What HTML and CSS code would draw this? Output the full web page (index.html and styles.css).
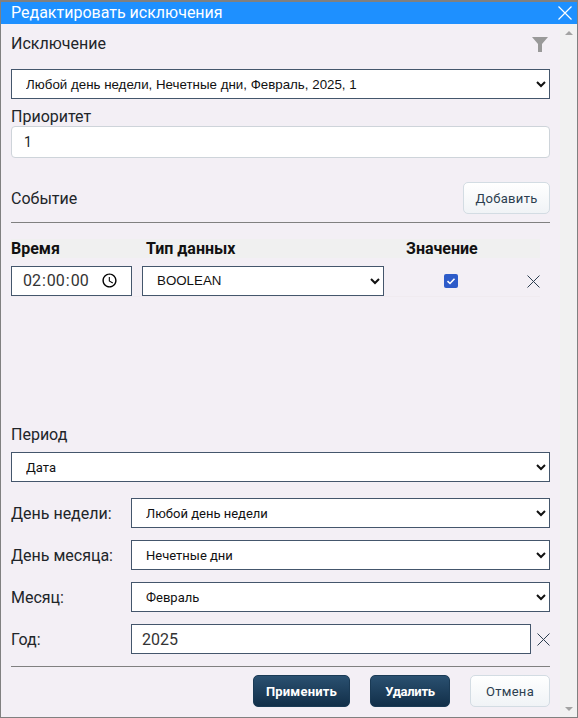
FILE: index.html
```html
<!DOCTYPE html>
<html lang="ru">
<head>
<meta charset="utf-8">
<title>Редактировать исключения</title>
<link rel="stylesheet" href="styles.css">
</head>
<body>
<div class="window">
  <header class="titlebar">
    <span class="title">Редактировать исключения</span>
    <svg class="close" viewBox="0 0 14 14" width="14" height="14"><path d="M0.5 0.5L13.5 13.5M13.5 0.5L0.5 13.5" stroke="#fff" stroke-width="1.2" fill="none"/></svg>
  </header>
  <div class="frame">
    <main class="content">
      <div class="head-row">
        <span class="label">Исключение</span>
        <svg class="filter" viewBox="0 0 16 15" width="16" height="15"><path d="M0 0H16L10 7V15H6V7Z" fill="#999"/></svg>
      </div>
      <select class="field sel-top"><option>Любой день недели, Нечетные дни, Февраль, 2025, 1</option></select>
      <div class="label prio-label">Приоритет</div>
      <input class="soft-input" value="1">
      <div class="event-row">
        <span class="event-label">Событие</span>
        <button class="btn btn-light add">Добавить</button>
      </div>
      <div class="rule rule-event"></div>
      <div class="thead">
        <span class="th th-time">Время</span>
        <span class="th th-type">Тип данных</span>
        <span class="th">Значение</span>
      </div>
      <div class="trow">
        <input class="field time" type="time" step="1" value="02:00:00">
        <select class="field type"><option>BOOLEAN</option></select>
        <span class="check-cell">
          <span class="check"><svg viewBox="0 0 14 14" width="14" height="14"><path d="M3.5 7.2L6 9.5L10.5 4.8" stroke="#fff" stroke-width="1.6" fill="none"/></svg></span>
        </span>
        <svg class="x" viewBox="0 0 13 13" width="13" height="13"><path d="M0.5 0.5L12.5 12.5M12.5 0.5L0.5 12.5" stroke="#2c3e50" stroke-width="1" fill="none"/></svg>
      </div>
      <div class="label period-label">Период</div>
      <select class="field sel-period"><option>Дата</option></select>
      <div class="form-grid">
        <label class="label">День недели:</label>
        <select class="field"><option>Любой день недели</option></select>
        <label class="label">День месяца:</label>
        <select class="field"><option>Нечетные дни</option></select>
        <label class="label">Месяц:</label>
        <select class="field"><option>Февраль</option></select>
        <label class="label">Год:</label>
        <div class="year-cell">
          <input class="field year" value="2025">
          <svg class="x" viewBox="0 0 13 13" width="13" height="13"><path d="M0.5 0.5L12.5 12.5M12.5 0.5L0.5 12.5" stroke="#2c3e50" stroke-width="1" fill="none"/></svg>
        </div>
      </div>
      <div class="rule rule-foot"></div>
      <footer class="actions">
        <button class="btn btn-dark apply">Применить</button>
        <button class="btn btn-dark del">Удалить</button>
        <button class="btn btn-light cancel">Отмена</button>
      </footer>
    </main>
    <aside class="scrollbar">
      <span class="arrow-up"></span>
      <span class="arrow-down"></span>
    </aside>
  </div>
</div>
</body>
</html>
```
FILE: styles.css
```css
* { box-sizing: border-box; }
html, body { margin: 0; padding: 0; }
body { width: 578px; height: 718px; overflow: hidden; font-family: Roboto, "Liberation Sans", sans-serif; color: #212529; }
.window { width: 578px; height: 718px; border: 1px solid #808080; border-top-width: 2px; display: flex; flex-direction: column; background: #f3eff5; }
.titlebar { height: 22px; flex: none; background: #1e90ff; color: #fff; display: flex; align-items: center; justify-content: space-between; padding: 0 5px 0 10px; }
.title { font-size: 16px; line-height: 22px; }
.frame { flex: 1; display: flex; min-height: 0; }
.content { width: 559px; flex: none; padding: 0 10px; display: flex; flex-direction: column; }
.scrollbar { flex: 1; background: #f1f1f1; display: flex; flex-direction: column; justify-content: space-between; align-items: center; padding: 7px 0 6px; }
.arrow-up { border: 4px solid transparent; border-top: 0; border-bottom: 4px solid #a3a3a3; width: 8px; height: 4px; }
.arrow-down { border: 4px solid transparent; border-bottom: 0; border-top: 4px solid #a3a3a3; width: 8px; height: 4px; }
.label { font-size: 16px; line-height: 20px; color: #212529; }
.head-row { display: flex; justify-content: space-between; align-items: center; height: 24px; margin-top: 8px; padding-right: 2px; }
.field { height: 30px; border: 1px solid #44566c; border-radius: 0; background: #fff; color: #111; font-family: inherit; font-size: 13px; padding: 0 10px; display: block; width: 100%; }
.sel-top { margin-top: 13px; font-family: "Liberation Sans", Arial, sans-serif; font-size: 13.33px; }
.prio-label { margin-top: 8px; }
.soft-input { height: 32px; margin-top: -1px; width: 100%; border: 1px solid #ced4da; border-radius: 4px; background: #fff; padding: 0 12px; font-family: inherit; font-size: 14px; color: #212529; display: block; }
.event-row { display: flex; justify-content: space-between; align-items: center; height: 32px; margin-top: 24px; }
.event-label { font-size: 16px; color: #212529; }
.btn { font-family: inherit; border-radius: 5px; height: 32px; padding: 0; font-size: 13px; }
.btn-light { border: 1px solid #d3dce3; color: #2c3e50; background: linear-gradient(#fff, #f0f3f6); letter-spacing: 0.3px; }
.btn-dark { border: 1px solid #1a3a55; color: #fff; font-weight: 700; background: linear-gradient(#2a5070, #122f49); letter-spacing: 0.2px; }
.add { width: 87px; }
.rule { height: 1px; background: #808080; flex: none; }
.rule-event { margin-top: 8px; }
.thead { display: flex; height: 19px; margin-top: 16px; background: #f0f0f0; width: 529px; align-items: center; }
.th { font-size: 16px; font-weight: 700; color: #111; line-height: 19px; }
.th-time { width: 135px; }
.th-type { width: 260px; }
.trow { display: flex; align-items: center; height: 39px; padding-top: 8px; padding-bottom: 1px; border-bottom: 1px solid #f0ebf0; width: 529px; }
.time { width: 121px; font-size: 16px; padding: 0 6px 0 10px; color: #333; }
.time::-webkit-datetime-edit-ampm-field { display: none; }
.time::-webkit-calendar-picker-indicator { margin: 0 4px 0 -10px; }
.type { width: 242px; margin-left: 10px; font-family: "Liberation Sans", Arial, sans-serif; font-size: 13.33px; }
.check-cell { width: 134px; display: flex; justify-content: center; }
.check { width: 14px; height: 14px; border-radius: 2px; background: #2d5bc9; display: block; }
.check svg { display: block; }
.trow .x { margin: 2px 0 0 9px; }
.period-label { margin-top: 128px; }
.sel-period { margin-top: 7px; }
.form-grid { display: grid; grid-template-columns: 120px 419px; row-gap: 12px; align-items: center; margin-top: 16px; }
.form-grid .label { height: 30px; line-height: 32px; }
.year-cell { display: flex; align-items: center; justify-content: space-between; }
.year { width: 400px; font-size: 16px; color: #333; }
.rule-foot { margin-top: 12px; }
.actions { display: flex; justify-content: flex-end; gap: 20px; margin-top: 8px; }
.apply { width: 97px; }
.del { width: 80px; letter-spacing: -0.3px; }
.cancel { width: 80px; }
```
